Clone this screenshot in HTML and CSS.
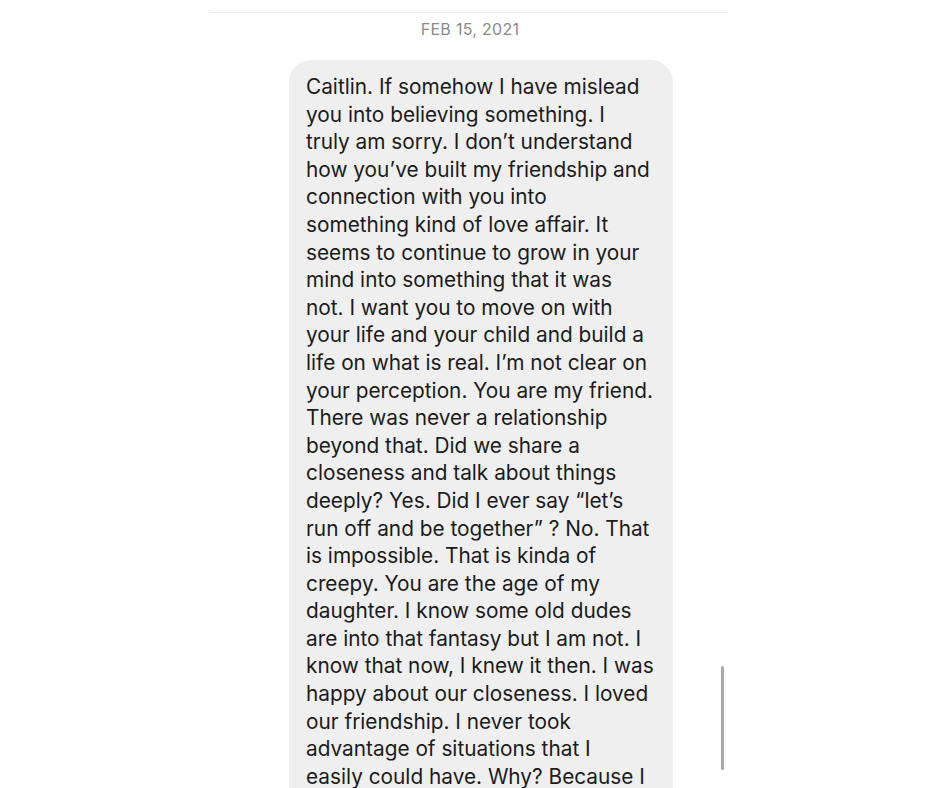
FILE: index.html
```html
<!DOCTYPE html>
<html>
<head>
<meta charset="utf-8">
<link rel="stylesheet" href="styles.css">
</head>
<body>
<div class="page">
  <div class="divider"></div>
  <div class="date">FEB 15, 2021</div>
  <div class="thread">
    <div class="bubble">
      <p class="msg">Caitlin. If somehow I have mislead<br>you into believing something. I<br>truly am sorry. I don’t understand<br>how you’ve built my friendship and<br>connection with you into<br>something kind of love affair. It<br>seems to continue to grow in your<br>mind into something that it was<br>not. I want you to move on with<br>your life and your child and build a<br>life on what is real. I’m not clear on<br>your perception. You are my friend.<br>There was never a relationship<br>beyond that. Did we share a<br>closeness and talk about things<br>deeply? Yes. Did I ever say “let’s<br>run off and be together” ? No. That<br>is impossible. That is kinda of<br>creepy. You are the age of my<br>daughter. I know some old dudes<br>are into that fantasy but I am not. I<br>know that now, I knew it then. I was<br>happy about our closeness. I loved<br>our friendship. I never took<br>advantage of situations that I<br>easily could have. Why? Because I</p>
    </div>
  </div>
  <div class="scrollbar"></div>
</div>
</body>
</html>
```
FILE: styles.css
```css
html, body {
  margin: 0;
  padding: 0;
  background: #ffffff;
  overflow: hidden;
}
.page {
  position: relative;
  width: 940px;
  height: 788px;
  overflow: hidden;
  font-family: Inter, "Helvetica Neue", Arial, sans-serif;
}
.divider {
  margin: 12px 0 0 210px;
  width: 518px;
  height: 1px;
  background: #ececec;
}
.date {
  margin-top: 7px;
  text-align: center;
  font-size: 16px;
  line-height: 18px;
  color: #8a8a8a;
  letter-spacing: 0.3px;
}
.thread {
  padding: 22px 0 0 289px;
}
.bubble {
  width: 384px;
  box-sizing: border-box;
  background: #efefef;
  border-radius: 22px;
  padding: 13px 10px 30px 17px;
}
.msg {
  margin: 0;
  font-size: 20.8px;
  line-height: 27.6px;
  color: #1b1b1b;
  white-space: nowrap;
}
.scrollbar {
  position: absolute;
  left: 721px;
  top: 666px;
  width: 3px;
  height: 104px;
  border-radius: 2px;
  background: #a9a9a9;
}
```
